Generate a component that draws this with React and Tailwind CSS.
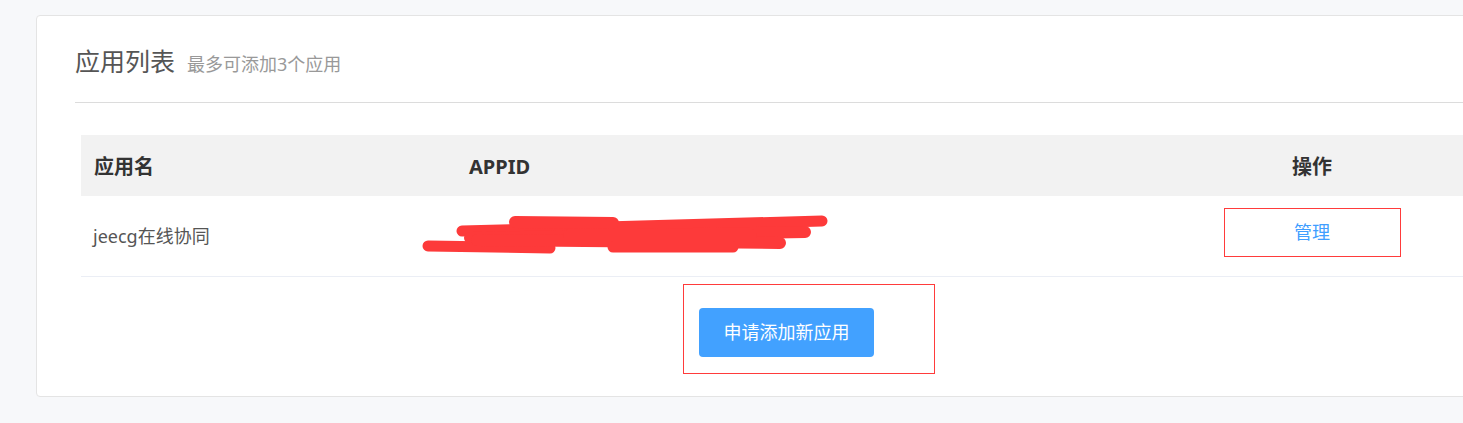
import React from "react";

const cjk = { fontFamily: '"Noto Sans", "Noto Sans CJK SC", sans-serif' };

function Scribble() {
  // red redaction strokes over the APPID value
  const lines = [
    [8, 32, 130, 34, 11],
    [42, 17, 402, 7, 11],
    [95, 8, 193, 9, 12],
    [50, 24, 385, 18, 12],
    [57, 26, 360, 29, 12],
    [150, 22, 330, 22, 14],
    [193, 33, 313, 33, 11],
  ];
  return (
    <svg width="410" height="45" viewBox="0 0 410 45" className="-ml-[36px] shrink-0">
      {lines.map(([x1, y1, x2, y2, w], i) => (
        <line key={i} x1={x1} y1={y1} x2={x2} y2={y2} stroke="#fd3a3a" strokeWidth={w} strokeLinecap="round" />
      ))}
    </svg>
  );
}

export default function App() {
  return (
    <div className="h-[423px] w-[1463px] overflow-hidden bg-[#f7f8fa] pl-[36px] pt-[15px]" style={cjk}>
      <div className="w-[1500px] h-[382px] bg-white border border-[#e4e4e4] rounded-[4px]">
        <div className="mx-[38px] h-[87px] border-b border-[#dcdcdc] pt-[29px] flex items-baseline gap-[12px]">
          <h1 className="text-[25px] leading-[32px] text-[#555]">应用列表</h1>
          <span className="text-[18px] text-[#999]">最多可添加3个应用</span>
        </div>

        <div className="ml-[44px] mt-[32px]">
          <div className="flex h-[61px] items-center bg-[#f2f2f2] text-[20px] font-bold text-[#333] pt-[3px]">
            <div className="w-[375px] pl-[13px]">应用名</div>
            <div className="w-[756px] pl-[13px]">APPID</div>
            <div className="w-[200px] text-center">操作</div>
          </div>
          <div className="flex h-[81px] items-center border-b border-[#ebeef5] text-[18px]">
            <div className="w-[375px] pl-[12px] text-[#555]">jeecg在线协同</div>
            <div className="w-[756px] flex items-center">
              <Scribble />
            </div>
            <div className="w-[200px] self-start pt-[12px] flex justify-center">
              <div className="w-[177px] h-[49px] border border-[#ff3b3b] flex items-center justify-center text-[#409eff]">
                管理
              </div>
            </div>
          </div>
          <div className="ml-[602px] mt-[7px] w-[252px] h-[90px] border border-[#ff3b3b] pl-[15px] pt-[23px]">
            <button className="w-[175px] h-[49px] rounded-[4px] bg-[#42a1ff] text-white text-[18px]">
              申请添加新应用
            </button>
          </div>
        </div>
      </div>
    </div>
  );
}
